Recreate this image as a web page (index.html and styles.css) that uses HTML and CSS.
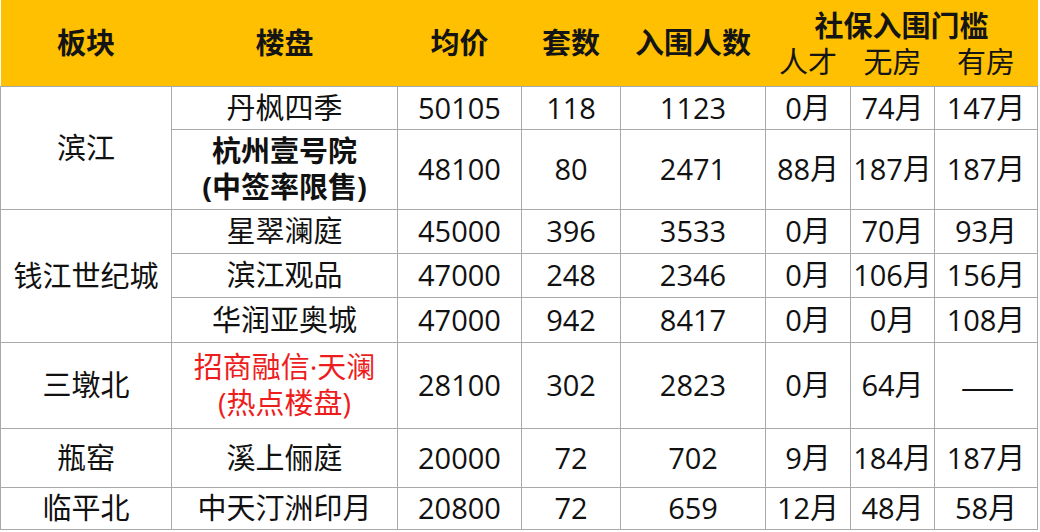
FILE: index.html
```html
<!DOCTYPE html>
<html lang="zh-CN">
<head>
<meta charset="utf-8">
<title>社保入围门槛</title>
<link rel="stylesheet" href="styles.css">
</head>
<body>
<table class="sheet">
  <colgroup>
    <col class="c-area"><col class="c-name"><col class="c-price"><col class="c-units"><col class="c-people"><col class="c-m1"><col class="c-m2"><col class="c-m3">
  </colgroup>
  <thead>
    <tr class="h1">
      <th rowspan="2">板块</th>
      <th rowspan="2">楼盘</th>
      <th rowspan="2">均价</th>
      <th rowspan="2">套数</th>
      <th rowspan="2">入围人数</th>
      <th colspan="3" class="group">社保入围门槛</th>
    </tr>
    <tr class="h2">
      <th class="sub">人才</th>
      <th class="sub">无房</th>
      <th class="sub">有房</th>
    </tr>
  </thead>
  <tbody>
    <tr class="r1">
      <td rowspan="2">滨江</td>
      <td>丹枫四季</td><td>50105</td><td>118</td><td>1123</td><td>0月</td><td>74月</td><td>147月</td>
    </tr>
    <tr class="r2">
      <td class="bold two">杭州壹号院<br>(中签率限售)</td>
      <td>48100</td><td>80</td><td>2471</td><td>88月</td><td>187月</td><td>187月</td>
    </tr>
    <tr class="r3">
      <td rowspan="3">钱江世纪城</td>
      <td>星翠澜庭</td><td>45000</td><td>396</td><td>3533</td><td>0月</td><td>70月</td><td>93月</td>
    </tr>
    <tr class="r4">
      <td>滨江观品</td><td>47000</td><td>248</td><td>2346</td><td>0月</td><td>106月</td><td>156月</td>
    </tr>
    <tr class="r5">
      <td>华润亚奥城</td><td>47000</td><td>942</td><td>8417</td><td>0月</td><td>0月</td><td>108月</td>
    </tr>
    <tr class="r6">
      <td>三墩北</td>
      <td class="hot">招商融信·天澜<br>(热点楼盘)</td>
      <td>28100</td><td>302</td><td>2823</td><td>0月</td><td>64月</td><td class="dash">——</td>
    </tr>
    <tr class="r7">
      <td>瓶窑</td>
      <td>溪上俪庭</td><td>20000</td><td>72</td><td>702</td><td>9月</td><td>184月</td><td>187月</td>
    </tr>
    <tr class="r8">
      <td>临平北</td>
      <td>中天汀洲印月</td><td>20800</td><td>72</td><td>659</td><td>12月</td><td>48月</td><td>58月</td>
    </tr>
  </tbody>
</table>
</body>
</html>
```

FILE: styles.css
```css
html, body {
  margin: 0;
  padding: 0;
  background: #ffffff;
}

.sheet {
  border-collapse: collapse;
  table-layout: fixed;
  width: 1037px;
  font-family: "Open Sans", "Noto Sans CJK SC", sans-serif;
  font-size: 29px;
  color: #111111;
}

.c-area { width: 171px; }
.c-name { width: 226px; }
.c-price { width: 124px; }
.c-units { width: 99px; }
.c-people { width: 145px; }
.c-m1 { width: 85px; }
.c-m2 { width: 84px; }
.c-m3 { width: 103px; }

.sheet th {
  background: #fec000;
  font-weight: 700;
  color: #141414;
  padding: 0;
  text-align: center;
  vertical-align: middle;
  line-height: 34px;
  white-space: nowrap;
}

.sheet .h1 { height: 44px; }
.sheet .h2 { height: 42px; }

.sheet .group {
  vertical-align: bottom;
  padding-bottom: 0;
  line-height: 36px;
}

.sheet .sub {
  font-weight: 400;
  vertical-align: top;
  padding-top: 1px;
}

.sheet td {
  border: 1px solid #a9a9a9;
  padding: 0;
  text-align: center;
  vertical-align: middle;
  line-height: 36px;
  white-space: nowrap;
  overflow: visible;
}

.r1 { height: 43px; }
.r2 { height: 80px; }
.r3 { height: 44px; }
.r4 { height: 44px; }
.r5 { height: 45px; }
.r6 { height: 86px; }
.r7 { height: 59px; }
.r8 { height: 42px; }

.bold {
  font-weight: 700;
}

.two {
  line-height: 35px;
}

.hot {
  color: #ee1d1d;
  line-height: 42px;
}

.sheet .dash {
  font-family: "Noto Sans CJK SC", sans-serif;
  font-size: 32px;
  letter-spacing: -1px;
  text-indent: 2px;
}
```
